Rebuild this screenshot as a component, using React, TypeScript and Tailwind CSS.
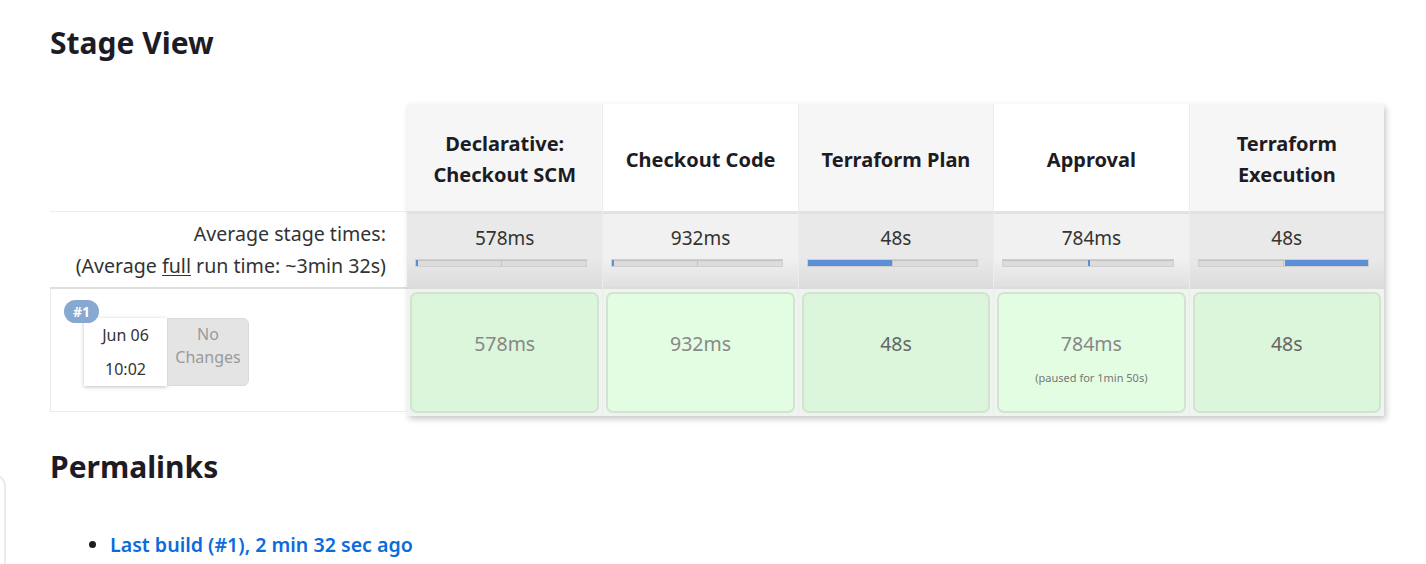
import React from "react";

type Stage = {
  name: string[];
  avg: string;
  bar: { left: number; width: number };
  run: string;
  note?: string;
  dark?: boolean;
};

const stages: Stage[] = [
  { name: ["Declarative:", "Checkout SCM"], avg: "578ms", bar: { left: 0, width: 1 }, run: "578ms" },
  { name: ["Checkout Code"], avg: "932ms", bar: { left: 0, width: 1 }, run: "932ms" },
  { name: ["Terraform Plan"], avg: "48s", bar: { left: 0, width: 50 }, run: "48s", dark: true },
  { name: ["Approval"], avg: "784ms", bar: { left: 50, width: 0.6 }, run: "784ms", note: "(paused for 1min 50s)" },
  { name: ["Terraform", "Execution"], avg: "48s", bar: { left: 51, width: 49 }, run: "48s", dark: true },
];

const font = { fontFamily: '"Segoe UI", "Noto Sans", "Open Sans", sans-serif' };

export default function App() {
  return (
    <div className="relative min-h-[564px] bg-white text-[#1d1c24] overflow-hidden" style={font}>
      {/* bord de la barre latérale */}
      <div className="absolute -left-4 top-[474px] w-[22px] h-[200px] rounded-tr-xl border-2 border-[#ebeaf3]" />

      <div className="pl-[50px] pt-[24px]">
        <h2 className="text-[30px] font-bold leading-[38px]">Stage View</h2>

        <div className="mt-[42px] flex">
          {/* colonne de gauche */}
          <div className="w-[357px] shrink-0 flex flex-col">
            <div className="h-[107px]" />
            <div className="h-[76px] border-t border-[#eeeeee] flex flex-col items-end justify-center pr-[21px] text-[19.6px] leading-[32px] text-[#333]">
              <span>Average stage times:</span>
              <span>
                (Average <span className="underline underline-offset-2">full</span> run time: ~3min 32s)
              </span>
            </div>
            <div className="h-[2px] bg-[#dedede]" />
            <div className="h-[123px] border-l border-b border-[#eaeaea] relative">
              <span className="absolute left-[13px] top-[11px] z-10 h-[23px] w-[35px] rounded-full bg-[#86a8d1] text-white text-[14px] font-bold flex items-center justify-center">
                #1
              </span>
              <div className="ml-[33px] mt-[29px] flex">
                <div className="w-[83px] h-[68px] bg-white shadow-[0_1px_4px_rgba(0,0,0,0.25)] flex flex-col items-center justify-center text-[16px] leading-[34px] text-[#333]">
                  <span>Jun 06</span>
                  <span>10:02</span>
                </div>
                <div className="w-[82px] h-[68px] bg-[#e4e4e4] border border-[#dadada] rounded-r-md flex flex-col items-center pt-[4px] text-[16px] leading-[23px] text-[#9a9a9a]">
                  <span>No</span>
                  <span>Changes</span>
                </div>
              </div>
            </div>
          </div>

          {/* tableau des étapes */}
          <div className="w-[977px] shrink-0 grid grid-cols-5 shadow-[2px_3px_6px_rgba(0,0,0,0.22)] bg-[#f3f3f3]">
            {stages.map((s, i) => (
              <div key={i} className={`flex flex-col ${i > 0 ? "border-l border-[#ececec]" : ""}`}>
                <div
                  className={`h-[107px] pt-[3px] flex flex-col items-center justify-center text-[20px] font-bold leading-[31px] text-center ${
                    i % 2 === 0 ? "bg-[#f6f6f6]" : "bg-white"
                  }`}
                >
                  {s.name.map((n) => (
                    <span key={n}>{n}</span>
                  ))}
                </div>
                <div
                  className={`h-[76px] border-t-[3px] border-[#e2e2e2] flex flex-col items-center pl-[8px] pr-[15px] pt-[11px] ${
                    i % 2 === 0
                      ? "bg-[linear-gradient(#e9e9e9_60%,#dcdcdc)]"
                      : "bg-[linear-gradient(#f1f1f1_60%,#e0e0e0)]"
                  }`}
                >
                  <span className="text-[19px] leading-[26px] text-[#333] pl-[7px]">{s.avg}</span>
                  <div className="relative mt-[8px] w-full h-[8px] bg-[#dcdcdc] border border-[#cfcfcf] shadow-[inset_0_1px_1px_rgba(0,0,0,0.12)]">
                    <div className="absolute left-1/2 top-0 bottom-0 w-px bg-[#c4c4c4]" />
                    <div
                      className="absolute top-0 bottom-0 bg-[#5d8ed8] min-w-[2px]"
                      style={{ left: `${s.bar.left}%`, width: `${s.bar.width}%` }}
                    />
                  </div>
                </div>
                <div className="h-[2px] bg-[#dcdcdc]" />
                <div className="h-[127px] p-[3px] bg-[#eef5ee]">
                  <div
                    className={`h-full rounded-[7px] border-2 border-[#d3e3d3] flex flex-col items-center pt-[37px] ${
                      i % 2 === 0 ? "bg-[#dcf6dc]" : "bg-[#e3fde3]"
                    }`}
                  >
                    <span className={`text-[19.5px] leading-[26px] ${s.dark ? "text-[#666]" : "text-[#888]"}`}>
                      {s.run}
                    </span>
                    {s.note && <span className="mt-[13px] text-[11px] text-[#777]">{s.note}</span>}
                  </div>
                </div>
              </div>
            ))}
          </div>
        </div>

        <h2 className="mt-[32px] text-[30px] font-bold leading-[38px]">Permalinks</h2>
        <ul className="mt-[44px] pl-[60px] list-disc text-[19.6px] font-semibold text-[#0b6bdc]">
          <li className="marker:text-[#1d1c24]">
            <a href="#">Last build (#1), 2 min 32 sec ago</a>
          </li>
        </ul>
      </div>
    </div>
  );
}
